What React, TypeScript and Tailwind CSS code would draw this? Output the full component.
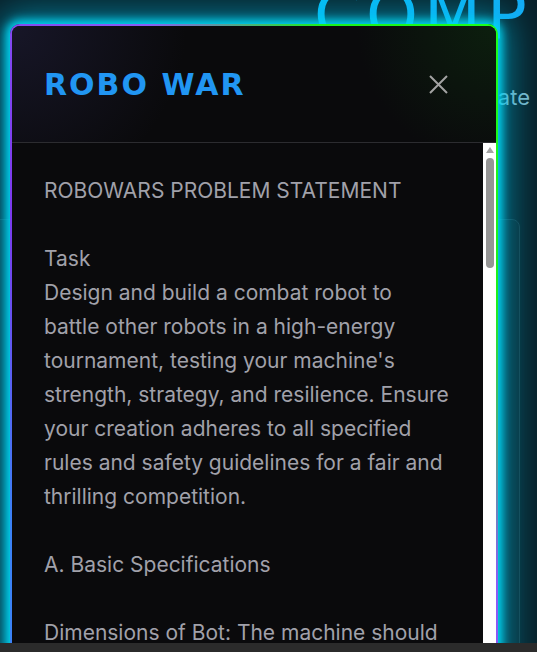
const bodyText = `ROBOWARS PROBLEM STATEMENT

Task
Design and build a combat robot to
battle other robots in a high-energy
tournament, testing your machine's
strength, strategy, and resilience. Ensure
your creation adheres to all specified
rules and safety guidelines for a fair and
thrilling competition.

A. Basic Specifications

Dimensions of Bot: The machine should
fit within a box of 750mm x 750mm x
1000mm (l x b x h) at any point of time
during the match.`;

export default function App() {
  return (
    <div className="relative h-[652px] w-[537px] overflow-hidden bg-[#08212a] font-['Inter',sans-serif]">
      {/* page behind the modal */}
      <div className="flex flex-col">
        <h1 className="-mt-[17px] ml-[314px] w-max whitespace-nowrap bg-[linear-gradient(90deg,#06bdf8,#2a8ff0)] bg-clip-text font-['DejaVu_Sans',sans-serif] text-[66px] font-normal leading-[66px] tracking-[6px] text-transparent">
          COMPETITIONS
        </h1>
        <p className="mt-[33px] whitespace-nowrap pr-[7px] text-right text-[22px] leading-[30px] text-[#7fb6c8]">
          Innovate, compete and dominate
        </p>
        <div className="-ml-[20px] mr-[17px] mt-[107px] h-[520px] rounded-lg border border-[#1a3c47] bg-[#0a2730]" />
      </div>

      {/* modal overlay */}
      <div className="absolute inset-0 pl-[10px] pt-[24px]">
        <div className="h-[780px] w-[488px] rounded-[10px] bg-[linear-gradient(to_bottom_left,#1cff1c_0%,#1cf01c_18%,#8b5cf6_36%,#7c3aed_62%,#3b82f6_82%)] p-[2px] shadow-[0_0_10px_4px_#00d8f5,0_0_34px_12px_rgba(0,190,230,0.55)]">
          <div className="flex h-full flex-col overflow-hidden rounded-[8px] bg-[#0a0a0c]">
            <div className="flex h-[117px] shrink-0 items-center justify-between border-b border-[#2c2c30] bg-[radial-gradient(circle_at_0%_0%,#171628_0%,transparent_35%),radial-gradient(circle_at_100%_0%,#0c1f0e_0%,transparent_28%)] pl-[32px] pr-[48px]">
              <h2 className="font-['DejaVu_Sans',sans-serif] text-[30px] font-bold tracking-[2px] text-[#2196f3]">
                ROBO WAR
              </h2>
              <svg width="19" height="19" viewBox="0 0 19 19" aria-label="close">
                <path d="M1 1L18 18M18 1L1 18" stroke="#a3a3a3" strokeWidth="2" />
              </svg>
            </div>
            <div className="flex min-h-0 flex-1">
              <div className="min-w-0 flex-1 overflow-hidden whitespace-pre px-[32px] pt-[31px] text-[21px] leading-[34px] text-[#a1a1aa]">
                {bodyText}
              </div>
              <div className="flex w-[13px] shrink-0 flex-col items-center bg-white pt-[4px]">
                <div className="h-0 w-0 border-b-[6px] border-l-[4px] border-r-[4px] border-b-[#a3a3a3] border-l-transparent border-r-transparent" />
                <div className="mt-[5px] h-[110px] w-[8px] rounded-full bg-[#959595]" />
              </div>
            </div>
          </div>
        </div>
      </div>

      {/* bottom bar */}
      <div className="absolute bottom-0 left-0 right-0 h-[9px] bg-[#2b2b2b]" />
    </div>
  );
}
